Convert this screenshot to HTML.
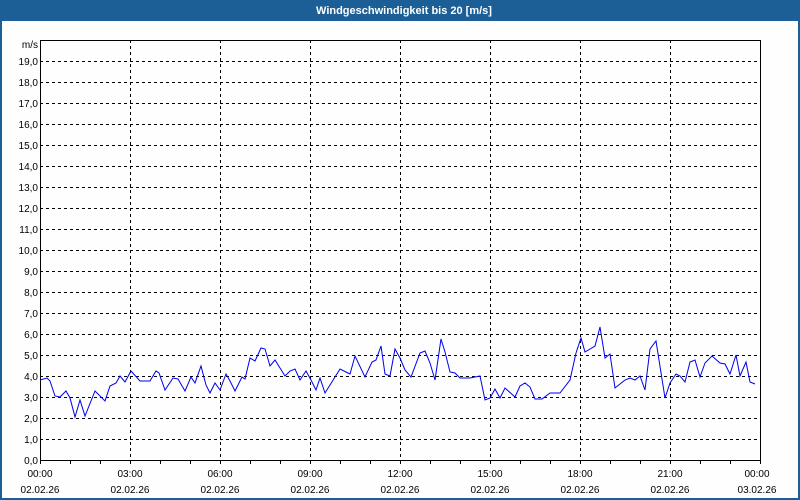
<!DOCTYPE html>
<html><head><meta charset="utf-8"><style>
html,body{margin:0;padding:0;width:800px;height:500px;overflow:hidden;background:#fdfefd}
svg{display:block}
text{font-family:"Liberation Sans",sans-serif;font-size:10px;fill:#000}
</style></head><body>
<svg width="800" height="500" xmlns="http://www.w3.org/2000/svg">
<rect x="0" y="0" width="800" height="500" fill="#fdfefd"/>
<rect x="0" y="0" width="800" height="21" fill="#1c5f96"/>
<rect x="0" y="0" width="2" height="500" fill="#1c5f96"/>
<rect x="798" y="0" width="2" height="500" fill="#1c5f96"/>
<rect x="0" y="498" width="800" height="2" fill="#1c5f96"/>
<text x="404" y="14" text-anchor="middle" style="font-size:11px;font-weight:bold;fill:#fff">Windgeschwindigkeit bis 20 [m/s]</text>
<g stroke="#000" stroke-width="1" stroke-dasharray="3,3" fill="none">
<path d="M40 61.5H760M40 82.5H760M40 103.5H760M40 124.5H760M40 145.5H760M40 166.5H760M40 187.5H760M40 208.5H760M40 229.5H760M40 250.5H760M40 271.5H760M40 292.5H760M40 313.5H760M40 334.5H760M40 355.5H760M40 376.5H760M40 397.5H760M40 418.5H760M40 439.5H760"/>
<path d="M130.5 40V460M220.5 40V460M310.5 40V460M400.5 40V460M490.5 40V460M580.5 40V460M670.5 40V460"/>
</g>
<rect x="40.5" y="40.5" width="720" height="420" fill="none" stroke="#000" stroke-width="1"/>
<path d="M40.5 460V464M70.5 460V464M100.5 460V464M130.5 460V464M160.5 460V464M190.5 460V464M220.5 460V464M250.5 460V464M280.5 460V464M310.5 460V464M340.5 460V464M370.5 460V464M400.5 460V464M430.5 460V464M460.5 460V464M490.5 460V464M520.5 460V464M550.5 460V464M580.5 460V464M610.5 460V464M640.5 460V464M670.5 460V464M700.5 460V464M730.5 460V464M760.5 460V464" stroke="#000"/>
<g text-anchor="end">
<text x="38" y="48">m/s</text>
<text x="38" y="65">19,0</text><text x="38" y="86">18,0</text><text x="38" y="107">17,0</text><text x="38" y="128">16,0</text><text x="38" y="149">15,0</text><text x="38" y="170">14,0</text><text x="38" y="191">13,0</text><text x="38" y="212">12,0</text><text x="38" y="233">11,0</text><text x="38" y="254">10,0</text><text x="38" y="275">9,0</text><text x="38" y="296">8,0</text><text x="38" y="317">7,0</text><text x="38" y="338">6,0</text><text x="38" y="359">5,0</text><text x="38" y="380">4,0</text><text x="38" y="401">3,0</text><text x="38" y="422">2,0</text><text x="38" y="443">1,0</text><text x="38" y="464">0,0</text>
</g>
<g text-anchor="middle">
<text x="40" y="477">00:00</text><text x="40" y="493">02.02.26</text>
<text x="130" y="477">03:00</text><text x="130" y="493">02.02.26</text>
<text x="220" y="477">06:00</text><text x="220" y="493">02.02.26</text>
<text x="310" y="477">09:00</text><text x="310" y="493">02.02.26</text>
<text x="400" y="477">12:00</text><text x="400" y="493">02.02.26</text>
<text x="490" y="477">15:00</text><text x="490" y="493">02.02.26</text>
<text x="580" y="477">18:00</text><text x="580" y="493">02.02.26</text>
<text x="670" y="477">21:00</text><text x="670" y="493">02.02.26</text>
<text x="757" y="477">00:00</text><text x="757" y="493">03.02.26</text>
</g>
<polyline fill="none" stroke="#0000ee" stroke-width="1" points="40,380 47,378 50,381 55,396 60,397 66,391 70,398 75,417 80,400 85,416 95,391 105,401 110,386 116,383 120,376 125,382 131,371 140,381 150,381 156,371 159,373 165,390 173,378 178,379 185,391 191,377 195,383 201,366 206,385 210,393 215,383 220,390 226,374 230,381 235,391 242,377 245,379 250,358 255,361 261,348 265,349 270,366 275,360 285,376 290,371 295,369 300,380 306,371 311,380 316,390 320,378 325,393 335,377 340,369 350,374 355,356 365,377 372,362 376,360 381,346 385,374 390,376 395,349 400,358 405,370 411,377 420,353 425,351 430,363 435,380 441,339 445,352 450,372 455,373 460,378 470,378 480,376 485,400 490,398 495,389 500,398 505,388 515,397 520,386 525,383 530,387 535,399 542,399 550,393 560,393 570,380 576,353 581,338 585,352 595,346 600,327 605,358 610,354 615,388 625,380 630,378 635,380 640,376 645,390 650,349 656,341 665,398 670,383 676,374 680,376 685,382 690,362 695,360 700,377 705,363 712,356 720,363 725,364 730,374 736,355 740,376 746,362 750,382 755,384"/>
</svg>
</body></html>
